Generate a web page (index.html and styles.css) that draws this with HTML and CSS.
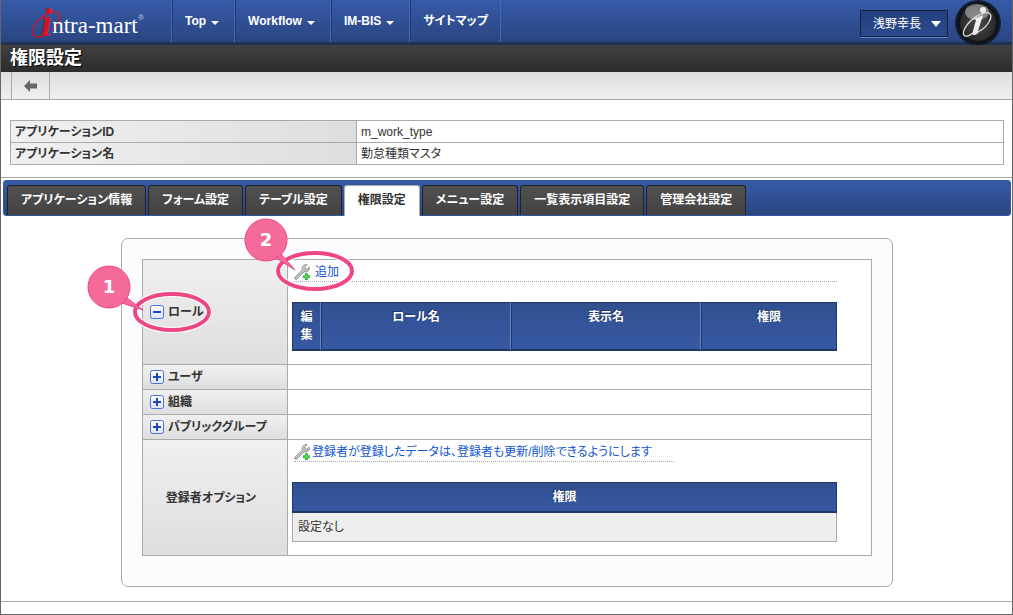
FILE: index.html
```
<!DOCTYPE html>
<html lang="ja">
<head>
  <meta charset="UTF-8">
  <title>権限設定</title>
  <link rel="stylesheet" href="styles.css">
</head>
<body>

<!-- アイコン定義 -->
<svg class="defs" width="0" height="0" aria-hidden="true">
  <defs>
    <linearGradient id="metal" x1="0" y1="0" x2="1" y2="1">
      <stop offset="0" stop-color="#e4e4e4"/>
      <stop offset="1" stop-color="#9a9a9a"/>
    </linearGradient>
    <linearGradient id="box" x1="0" y1="0" x2="0" y2="1">
      <stop offset="0" stop-color="#ffffff"/>
      <stop offset="1" stop-color="#dce4f7"/>
    </linearGradient>
    <radialGradient id="ball">
      <stop offset="0" stop-color="#4a4a4a"/>
      <stop offset="0.75" stop-color="#2b2b2b"/>
      <stop offset="0.82" stop-color="#0c0f16"/>
      <stop offset="1" stop-color="#172238"/>
    </radialGradient>
    <symbol id="wrench" viewBox="0 0 16 16">
      <path d="M1 13 L8.2 6 C7.6 3.8 8.4 1.8 10.6 .8 C11.6 .4 12.6 .4 13.2 .8 L10.9 3 L11.2 4.8 L13 5.1 L15.3 2.9 C15.8 4.2 15.4 5.8 14.3 6.9 C13.2 8 11.6 8.3 10.1 7.9 L3 15 C2.4 15.6 1.5 15.5 .9 15 C.4 14.4 .4 13.6 1 13 Z" fill="url(#metal)" stroke="#888" stroke-width=".7"/>
      <path d="M11.5 9.5 h2 v2.2 h2.2 v2 h-2.2 v2.2 h-2 v-2.2 h-2.2 v-2 h2.2 Z" fill="#4be055" stroke="#14a020" stroke-width=".7"/>
    </symbol>
    <symbol id="plus" viewBox="0 0 15 15">
      <rect x=".5" y=".5" width="13" height="13" rx="2" fill="url(#box)" stroke="#4a6fd8"/>
      <path d="M3 7 H11 M7 3 V11" stroke="#1f45b5" stroke-width="2"/>
    </symbol>
    <symbol id="minus" viewBox="0 0 15 15">
      <rect x=".5" y=".5" width="13" height="13" rx="2" fill="url(#box)" stroke="#4a6fd8"/>
      <path d="M3 7 H11" stroke="#1f45b5" stroke-width="2"/>
    </symbol>
  </defs>
</svg>

<div class="page">

  <!-- ヘッダー -->
  <header class="header">
    <a href="#" class="logo" aria-label="intra-mart">
      <svg width="120" height="48" viewBox="0 0 120 48">
        <path d="M14 35 C6 39 -1 36 2 28 C6 19 17 11 25 12 C32 14 29 23 21 30" fill="none" stroke="#d8131f" stroke-width="1.3"/>
        <text x="10" y="36" class="logo-text"><tspan class="logo-i">i</tspan><tspan dy="-3">ntra-mart</tspan></text>
        <text x="107" y="20" class="logo-reg">®</text>
      </svg>
    </a>
    <nav class="nav">
      <a href="#">Top <span class="caret"></span></a>
      <a href="#">Workflow <span class="caret"></span></a>
      <a href="#">IM-BIS <span class="caret"></span></a>
      <a href="#">サイトマップ</a>
    </nav>
    <div class="user">
      <select class="user-select" aria-label="ユーザ">
        <option>浅野幸長</option>
      </select>
      <span class="user-arrow"></span>
    </div>
    <a href="#" class="emblem" aria-label="intra-mart">
      <svg width="48" height="48" viewBox="0 0 48 48">
        <circle cx="24" cy="23" r="23" fill="url(#ball)"/>
        <ellipse cx="23" cy="12" rx="12" ry="8" fill="#fff" opacity=".4"/>
        <path d="M19 33 C11 39 7 36 11 28 C16 19 29 11 35 13 C40 16 34 26 26 31" fill="none" stroke="#ddd" stroke-width="1.3"/>
        <circle cx="29" cy="10" r="3" fill="#eee"/>
        <path d="M20 19 C23 18 26 16 29 15 L24 31 C25 31 26 30 27 29 C25 33 22 35 20 35 C18 35 18 33 19 31 L22 20 Z" fill="#eee"/>
      </svg>
    </a>
  </header>

  <h1 class="title">権限設定</h1>

  <div class="toolbar">
    <button type="button" class="back" aria-label="戻る">
      <svg width="14" height="12" viewBox="0 0 14 12">
        <path d="M0 6 L6 0 V3.5 H13 V8.5 H6 V12 Z" fill="#666"/>
      </svg>
    </button>
  </div>

  <!-- アプリケーション -->
  <table class="info">
    <tr><th scope="row">アプリケーションID</th><td>m_work_type</td></tr>
    <tr><th scope="row">アプリケーション名</th><td>勤怠種類マスタ</td></tr>
  </table>

  <!-- タブ -->
  <div class="tab-area">
    <nav class="tabs">
      <a href="#">アプリケーション情報</a>
      <a href="#">フォーム設定</a>
      <a href="#">テーブル設定</a>
      <a href="#" class="active">権限設定</a>
      <a href="#">メニュー設定</a>
      <a href="#">一覧表示項目設定</a>
      <a href="#">管理会社設定</a>
    </nav>
  </div>

  <!-- 権限 -->
  <main class="panel">
    <table class="auth">
      <tr>
        <th scope="row">
          <button type="button" class="toggle"><svg width="15" height="15"><use href="#minus"/></svg>ロール</button>
          <svg class="callout callout-role" width="126" height="72" viewBox="0 0 126 72">
            <ellipse cx="86" cy="48" rx="37" ry="18" class="ring-edge"/>
            <ellipse cx="86" cy="48" rx="37" ry="18" class="ring"/>
            <circle cx="23" cy="23" r="21" class="bubble"/>
            <path d="M41 34 L57 46 L36 39 Z" class="bubble"/>
            <circle cx="23" cy="23" r="20" class="bubble-fill"/>
            <text x="23" y="29" class="number">1</text>
          </svg>
        </th>
        <td>
          <div class="links add"><a href="#"><svg width="16" height="16"><use href="#wrench"/></svg>追加</a></div>
          <svg class="callout callout-add" width="112" height="74" viewBox="0 0 112 74">
            <ellipse cx="72" cy="54" rx="37" ry="18" class="ring-edge"/>
            <ellipse cx="72" cy="54" rx="37" ry="18" class="ring"/>
            <circle cx="23" cy="23" r="21" class="bubble"/>
            <path d="M38 37 L52 53 L33 41 Z" class="bubble"/>
            <circle cx="23" cy="23" r="20" class="bubble-fill"/>
            <text x="23" y="29" class="number">2</text>
          </svg>
          <table class="grid">
            <thead>
              <tr>
                <th class="col-edit">編集</th>
                <th class="col-name">ロール名</th>
                <th class="col-name">表示名</th>
                <th>権限</th>
              </tr>
            </thead>
          </table>
        </td>
      </tr>
      <tr>
        <th scope="row"><button type="button" class="toggle"><svg width="15" height="15"><use href="#plus"/></svg>ユーザ</button></th>
        <td></td>
      </tr>
      <tr>
        <th scope="row"><button type="button" class="toggle"><svg width="15" height="15"><use href="#plus"/></svg>組織</button></th>
        <td></td>
      </tr>
      <tr>
        <th scope="row"><button type="button" class="toggle"><svg width="15" height="15"><use href="#plus"/></svg>パブリックグループ</button></th>
        <td></td>
      </tr>
      <tr>
        <th scope="row" class="option">登録者オプション</th>
        <td>
          <div class="links owner"><a href="#"><svg width="16" height="16"><use href="#wrench"/></svg>登録者が登録したデータは、登録者も更新/削除できるようにします</a></div>
          <table class="grid">
            <thead>
              <tr><th>権限</th></tr>
            </thead>
            <tbody>
              <tr><td>設定なし</td></tr>
            </tbody>
          </table>
        </td>
      </tr>
    </table>
  </main>

  <footer class="footer"></footer>
</div>

</body>
</html>
```
FILE: styles.css
```
* {
  margin: 0; padding: 0; box-sizing: border-box;
}
body {
  font-family: "Liberation Sans", "Noto Sans CJK JP", sans-serif;
  font-size: 12px;
  line-height: 18px;
  font-feature-settings: "palt";
  color: #333;
  background: #fff;
}
a {
  text-decoration: none;
}
button, select {
  font: inherit;
  font-feature-settings: inherit;
  color: inherit;
  background: none;
  border: none;
  cursor: pointer;
}
table {
  border-collapse: separate;
  border-spacing: 0;
}
.defs {
  position: absolute;
}

.page {
  min-height: 100vh;
  display: flex;
  flex-direction: column;
  border: 1px solid #666;
  border-top: none;
}

/* ヘッダー */
.header {
  display: flex;
  height: 45px;
  background: linear-gradient(#375ba9, #2a4580);
  border-bottom: 3px solid #223255;
}
.logo {
  width: 170px;
  padding-left: 30px;
}
.logo-text {
  font: 23px "Liberation Serif", serif;
  fill: #fff;
}
.logo-i {
  font: italic bold 40px "Liberation Serif", serif;
  fill: #d8131f;
}
.logo-reg {
  font: 8px "Liberation Sans", sans-serif;
  fill: #c5cfe6;
}
.nav {
  display: flex;
  flex: 1;
  border-left: 1px solid #4468b8;
}
.nav a {
  display: flex;
  align-items: center;
  gap: 5px;
  padding: 0 15px 0 12px;
  color: #fff;
  font-weight: bold;
  border-left: 1px solid #213a70;
  border-right: 1px solid #4468b8;
}
.nav a:last-child {
  padding-right: 12px;
}
.caret {
  margin-top: 4px;
  border: 4px solid transparent;
  border-top-color: #fff;
  border-bottom: none;
}
.user {
  position: relative;
  margin: 10px 6px 0 0;
}
.user-select {
  appearance: none;
  width: 88px;
  height: 27px;
  padding-left: 12px;
  color: #fff;
  background: linear-gradient(#253f7c, #2c4a8c);
  border: 1px solid #14203c;
  box-shadow: 0 1px 0 #6482c4;
}
.user-select option {
  color: #333;
}
.user-arrow {
  position: absolute;
  top: 11px;
  right: 7px;
  border: 5px solid transparent;
  border-top: 6px solid #fff;
  border-bottom: none;
  pointer-events: none;
}
.emblem {
  width: 48px;
  height: 48px;
  margin-right: 10px;
}

.title {
  height: 27px;
  padding-left: 9px;
  font-size: 18px;
  line-height: 27px;
  color: #fff;
  text-shadow: 1px 1px 0 #000;
  background: linear-gradient(#414141, #2c2c2c);
}

.toolbar {
  display: flex;
  height: 28px;
  padding-left: 10px;
  background: linear-gradient(#dedede, #f0f0f0);
  border-bottom: 1px solid #aaa;
}
.back {
  display: flex;
  align-items: center;
  justify-content: center;
  width: 39px;
  border-left: 1px solid #aaa;
  border-right: 1px solid #aaa;
}

/* アプリケーション */
.info {
  width: calc(100% - 17px);
  margin: 20px 8px 12px 9px;
  border-top: 1px solid #aaa;
  border-left: 1px solid #aaa;
}
.info th, .info td {
  height: 22px;
  padding: 0 4px;
  line-height: 20px;
  text-align: left;
  border-right: 1px solid #aaa;
  border-bottom: 1px solid #aaa;
}
.info th {
  width: 346px;
  background: linear-gradient(to right, #f0f0f0, #dedede);
}

/* タブ */
.tab-area {
  padding: 2px 1px 0 2px;
  border-top: 1px solid #aaa;
}
.tabs {
  display: flex;
  align-items: flex-end;
  gap: 2px;
  height: 36px;
  padding-left: 3px;
  background: linear-gradient(#375ba9, #2a4580);
  border: 1px solid #2f57a6;
  border-radius: 3px;
}
.tabs a {
  height: 30px;
  padding: 0 13px;
  line-height: 29px;
  font-weight: bold;
  color: #fff;
  background: linear-gradient(#505050, #434343);
  border: 1px solid #222;
  border-bottom: none;
  border-radius: 3px 3px 0 0;
}
.tabs .active {
  height: 31px;
  margin-bottom: -1px;
  color: #333;
  background: #fff;
  border-color: #aaa;
}

/* 権限 */
.panel {
  margin: 22px 119px 14px 120px;
  padding: 20px 20px 30px;
  background: #fcfcfe;
  border: 1px solid #aaa;
  border-radius: 7px;
}
.auth {
  width: 100%;
  background: #fff;
  border-top: 1px solid #aaa;
  border-left: 1px solid #aaa;
}
.auth > tbody > tr > th {
  position: relative;
  width: 145px;
  height: 25px;
  padding: 0 7px;
  text-align: left;
  background: linear-gradient(#f0f0f0, #dedede);
  border-right: 1px solid #aaa;
  border-bottom: 1px solid #aaa;
}
.auth > tbody > tr > .option {
  padding-right: 15px;
  text-align: center;
}
.auth > tbody > tr > td {
  position: relative;
  padding: 0 34px 0 4px;
  border-right: 1px solid #aaa;
  border-bottom: 1px solid #aaa;
}
.toggle {
  display: flex;
  align-items: center;
  gap: 3px;
  font-weight: bold;
}
.links {
  height: 22px;
  margin: 0 0 20px 2px;
  border-bottom: 1px dotted #aaa;
}
.links a {
  display: flex;
  align-items: center;
  height: 24px;
  color: #1155cc;
}
.add a {
  gap: 5px;
}
.owner {
  width: 380px;
}
.owner a {
  gap: 2px;
}

.grid {
  width: 100%;
  margin-bottom: 13px;
}
.grid th {
  padding: 5px 7px;
  vertical-align: top;
  color: #fff;
  text-shadow: -1px -1px 0 #203665;
  background: linear-gradient(#305090, #3759a4);
  border-top: 1px solid #203665;
  border-left: 1px solid #203665;
  border-right: 1px solid #6685c8;
  border-bottom: 2px solid #203665;
}
.grid th:last-child {
  border-right-color: #203665;
}
.grid .col-edit {
  width: 29px;
}
.grid .col-name {
  width: 190px;
}
.grid td {
  padding: 5px;
  background: #eee;
  border: 1px solid #aaa;
  border-top: none;
}

/* 吹き出し */
.callout {
  position: absolute;
  z-index: 1;
  pointer-events: none;
}
.callout-role {
  left: -57px;
  top: 4px;
}
.callout-add {
  left: -45px;
  top: -43px;
}
.ring-edge {
  fill: none;
  stroke: #fff;
  stroke-width: 6;
}
.ring {
  fill: none;
  stroke: #ee4585;
  stroke-width: 4;
}
.bubble {
  fill: #f46a9b;
  stroke: #ee4585;
  stroke-width: 1;
}
.bubble-fill {
  fill: #f46a9b;
}
.number {
  font: bold 18px "DejaVu Sans", sans-serif;
  fill: #fff;
  text-anchor: middle;
}

.footer {
  height: 13px;
  border-top: 1px solid #aaa;
}
```
